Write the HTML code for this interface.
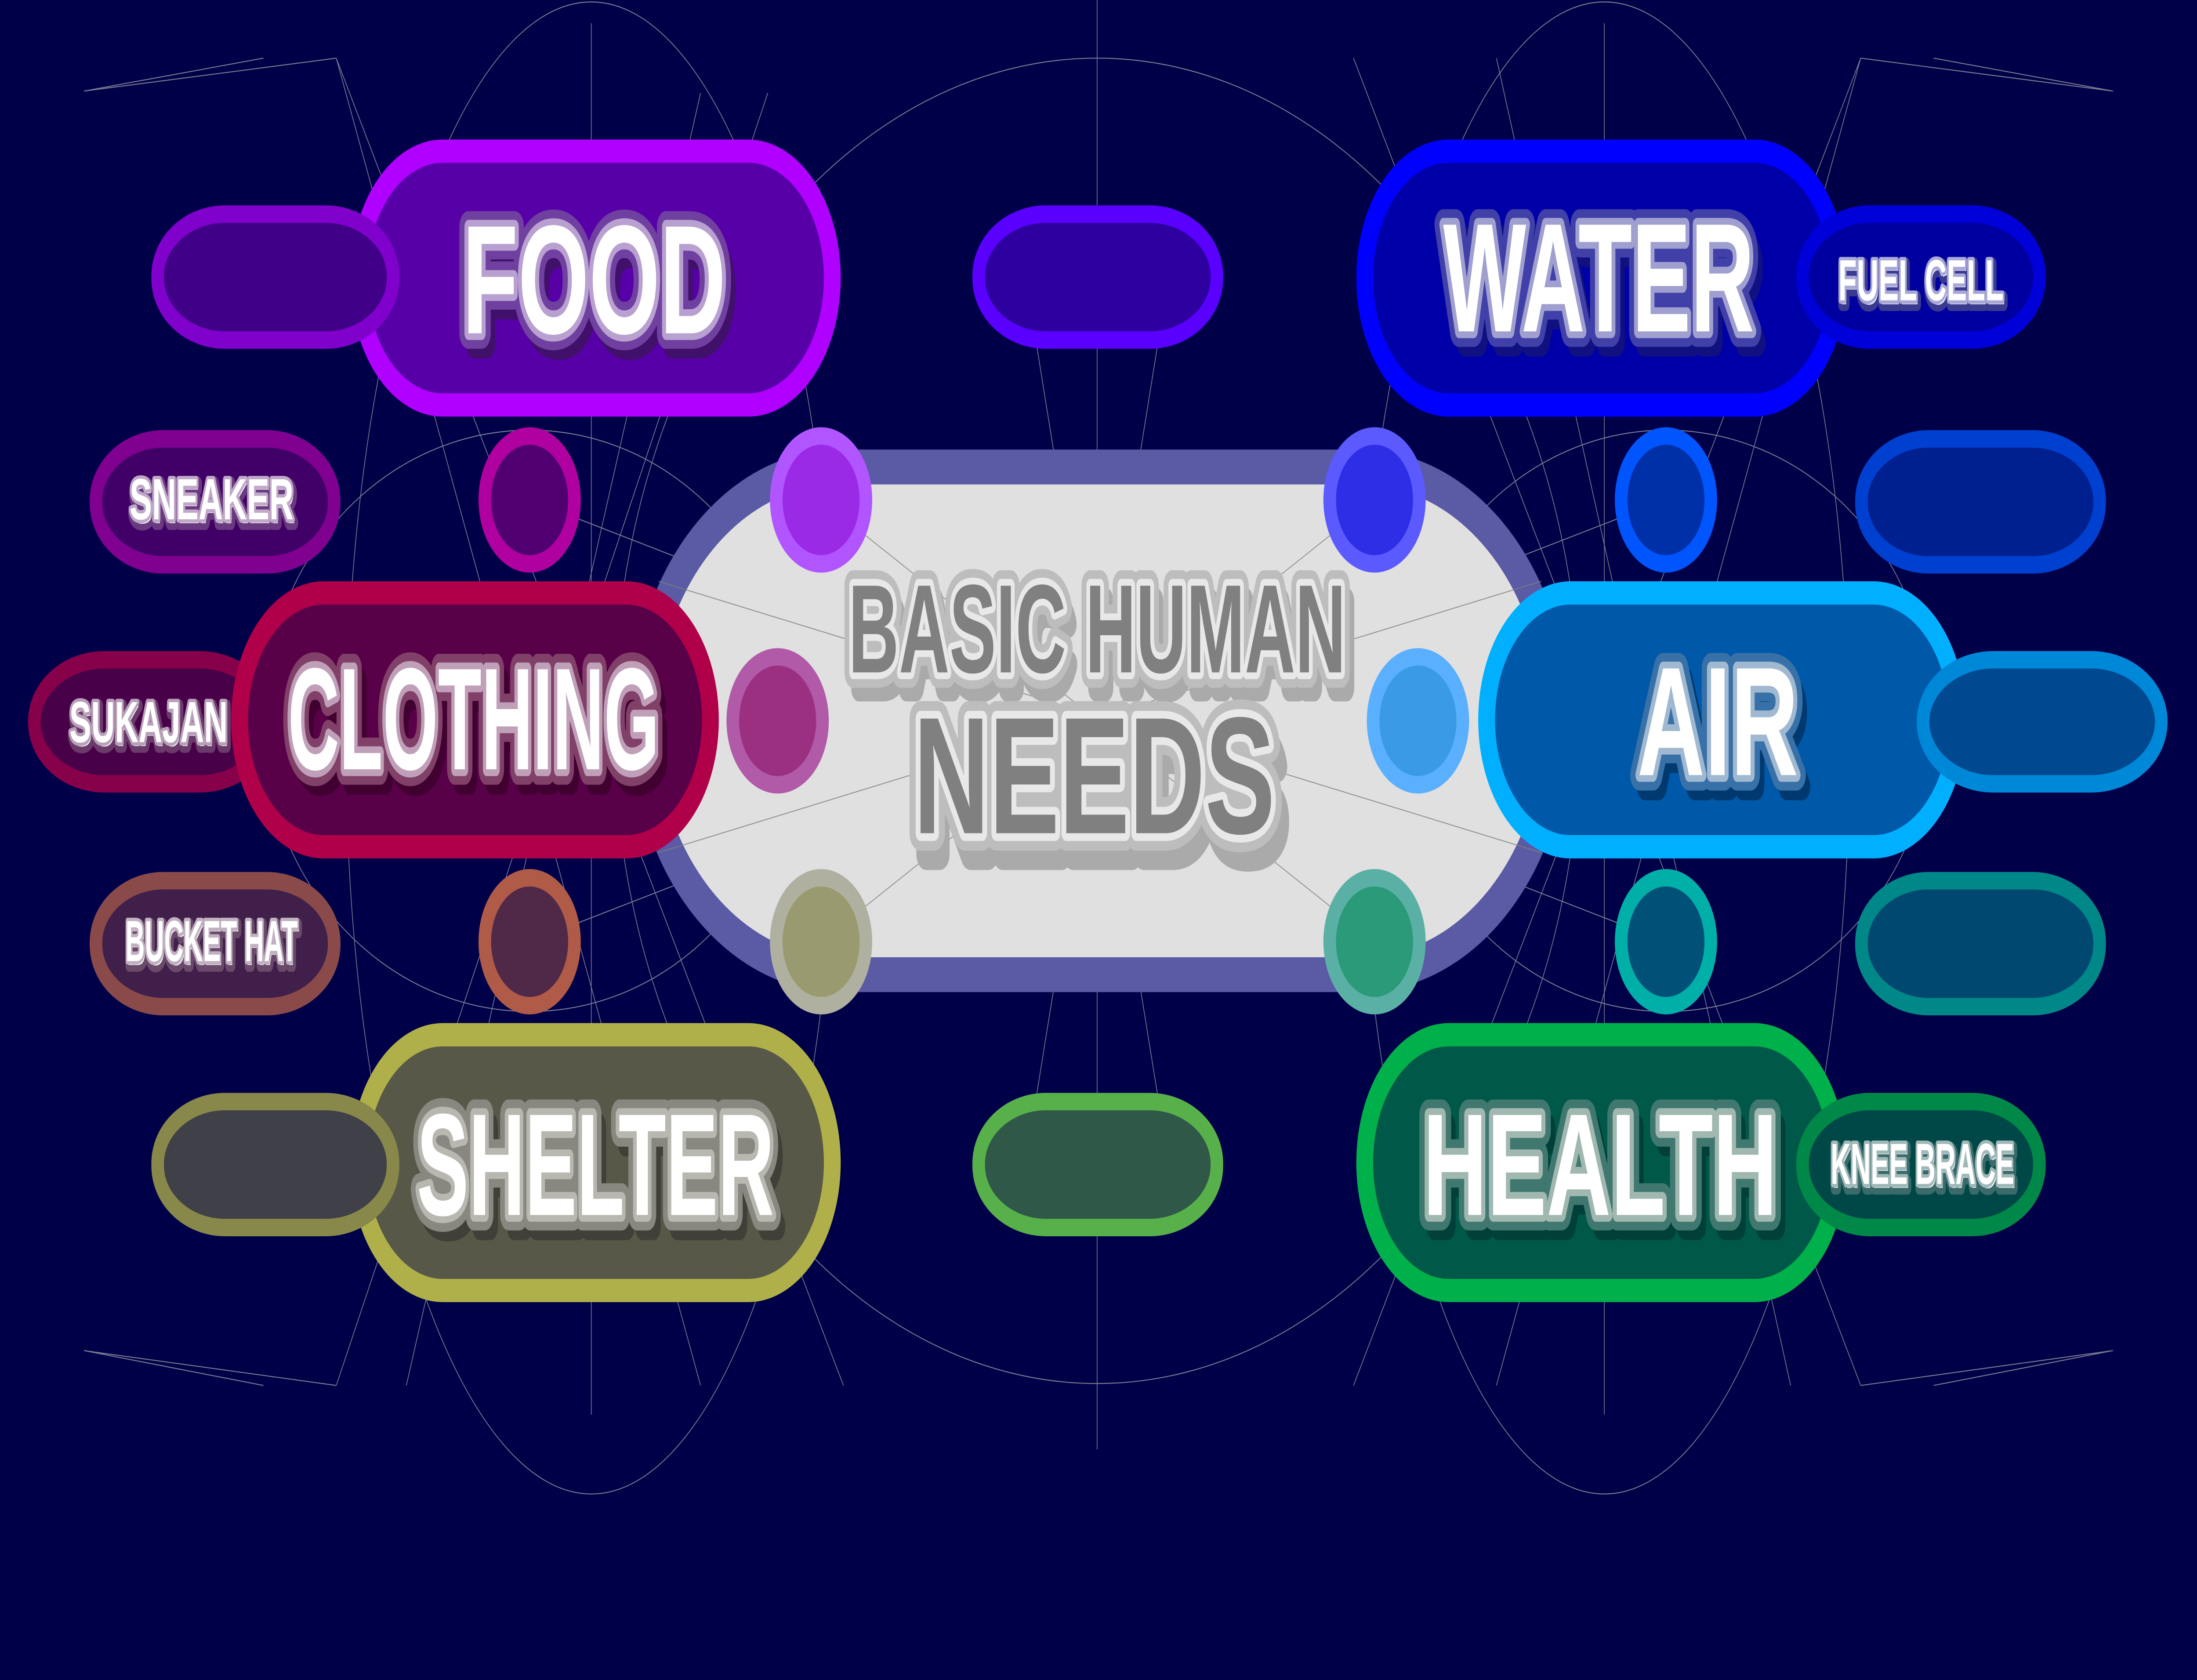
<!DOCTYPE html>
<html><head><meta charset="utf-8"><style>
html,body{margin:0;padding:0;background:#000048;width:100%;height:100%;overflow:hidden;}
svg{display:block;position:fixed;left:0;top:0;width:100vw;height:100vh}
text{font-family:"Liberation Sans","DejaVu Sans",sans-serif;font-weight:bold;text-anchor:middle;stroke-linejoin:round;paint-order:stroke}
</style></head><body>
<svg viewBox="0 0 1568 867" preserveAspectRatio="none" xmlns="http://www.w3.org/2000/svg">
<rect width="1568" height="867" fill="#000048"/>
<g fill="none" stroke="#9a9aa8" stroke-width="0.5" opacity="0.8">
<ellipse cx="422" cy="386" rx="175" ry="385"/>
<ellipse cx="1145" cy="386" rx="175" ry="385"/>
<ellipse cx="783" cy="372" rx="345" ry="342"/>
<ellipse cx="378" cy="372" rx="190" ry="150"/>
<ellipse cx="1189" cy="372" rx="190" ry="150"/>
<line x1="422" y1="12" x2="422" y2="730"/>
<line x1="1145" y1="12" x2="1145" y2="730"/>
<line x1="783" y1="0" x2="783" y2="748"/>
<line x1="60" y1="47" x2="240" y2="30"/><line x1="60" y1="47" x2="188" y2="30"/>
<line x1="240" y1="30" x2="602" y2="715"/><line x1="240" y1="30" x2="500" y2="715"/>
<line x1="60" y1="697" x2="240" y2="715"/><line x1="60" y1="697" x2="188" y2="715"/>
<line x1="240" y1="715" x2="548" y2="48"/><line x1="290" y1="715" x2="500" y2="48"/>
<line x1="1508" y1="47" x2="1328" y2="30"/><line x1="1508" y1="47" x2="1380" y2="30"/>
<line x1="1328" y1="30" x2="966" y2="715"/><line x1="1328" y1="30" x2="1068" y2="715"/>
<line x1="1508" y1="697" x2="1328" y2="715"/><line x1="1508" y1="697" x2="1380" y2="715"/>
<line x1="1328" y1="715" x2="966" y2="30"/><line x1="1278" y1="715" x2="1068" y2="30"/>
<line x1="378" y1="258" x2="1189" y2="486"/><line x1="378" y1="486" x2="1189" y2="258"/>
<line x1="555" y1="372" x2="1012" y2="372"/>
<line x1="732" y1="143" x2="783" y2="372"/><line x1="834" y1="143" x2="783" y2="372"/>
<line x1="732" y1="600" x2="783" y2="372"/><line x1="834" y1="600" x2="783" y2="372"/>
</g>
<rect x="459" y="241" width="652" height="262" rx="140" ry="131" fill="#e0e0e0" stroke="#5a5aa5" stroke-width="18"/>
<g fill="none" stroke="#808080" stroke-width="0.5" opacity="0.8">
<line x1="586" y1="258" x2="981" y2="486"/><line x1="586" y1="486" x2="981" y2="258"/>
<line x1="470" y1="300" x2="1100" y2="440"/><line x1="470" y1="440" x2="1100" y2="300"/>
</g>
<rect x="24.5" y="340.5" width="168" height="64" rx="50" ry="32" fill="#480048" stroke="#86004a" stroke-width="9"/>
<rect x="256" y="78" width="338" height="131" rx="60" ry="66" fill="#5800a8" stroke="#b000ff" stroke-width="12"/>
<rect x="974" y="78" width="338" height="131" rx="60" ry="66" fill="#0000a8" stroke="#0000ff" stroke-width="12"/>
<rect x="171" y="306" width="336" height="131" rx="60" ry="66" fill="#580048" stroke="#b0004a" stroke-width="12"/>
<rect x="1061" y="306" width="336" height="131" rx="60" ry="66" fill="#0058a8" stroke="#00b0ff" stroke-width="12"/>
<rect x="256" y="534" width="338" height="132" rx="60" ry="66" fill="#585848" stroke="#b0b04a" stroke-width="12"/>
<rect x="974" y="534" width="338" height="132" rx="60" ry="66" fill="#005848" stroke="#00b04a" stroke-width="12"/>
<g stroke-width="9">
<rect x="1372.5" y="340.5" width="170" height="64" rx="50" ry="32" fill="#004890" stroke="#0088d8"/>
<rect x="112.5" y="110.5" width="168" height="65" rx="48" ry="32" fill="#400088" stroke="#8000cc"/>
<rect x="698.5" y="110.5" width="170" height="65" rx="48" ry="32" fill="#2e00a0" stroke="#5a00ff"/>
<rect x="1286.5" y="110.5" width="169" height="65" rx="48" ry="32" fill="#0000a0" stroke="#0000d8"/>
<rect x="68.5" y="226.5" width="170" height="65" rx="48" ry="32" fill="#400068" stroke="#800090"/>
<rect x="1328.5" y="226.5" width="170" height="65" rx="48" ry="32" fill="#002090" stroke="#0040d0"/>
<rect x="68.5" y="454.5" width="170" height="65" rx="48" ry="32" fill="#40204a" stroke="#8a4a4a"/>
<rect x="1328.5" y="454.5" width="170" height="65" rx="48" ry="32" fill="#004870" stroke="#008888"/>
<rect x="112.5" y="568.5" width="168" height="65" rx="48" ry="32" fill="#404048" stroke="#88884a"/>
<rect x="698.5" y="568.5" width="170" height="65" rx="48" ry="32" fill="#305848" stroke="#58b04a"/>
<rect x="1286.5" y="568.5" width="169" height="65" rx="48" ry="32" fill="#004848" stroke="#008848"/>
</g>
<g stroke-width="9">
<ellipse cx="378" cy="258" rx="32" ry="33" fill="#500070" stroke="#b000a0"/>
<ellipse cx="586" cy="258" rx="32" ry="33" fill="#9b2ae6" stroke="#b055ff"/>
<ellipse cx="981" cy="258" rx="32" ry="33" fill="#2e2ee6" stroke="#5a5aff"/>
<ellipse cx="1189" cy="258" rx="32" ry="33" fill="#0030a8" stroke="#0055ff"/>
<ellipse cx="555" cy="372" rx="32" ry="33" fill="#9c3080" stroke="#b05aa8"/>
<ellipse cx="1012" cy="372" rx="32" ry="33" fill="#3a9ae6" stroke="#5ab0ff"/>
<ellipse cx="378" cy="486" rx="32" ry="33" fill="#502848" stroke="#b05a48"/>
<ellipse cx="586" cy="486" rx="32" ry="33" fill="#9a9a70" stroke="#b0b0a0"/>
<ellipse cx="981" cy="486" rx="32" ry="33" fill="#2a9a78" stroke="#5ab0a5"/>
<ellipse cx="1189" cy="486" rx="32" ry="33" fill="#005078" stroke="#00b0a8"/>
</g>
<g font-size="80">
<text x="428" y="178" textLength="188" lengthAdjust="spacingAndGlyphs" fill="#40106a" stroke="#40106a" stroke-width="14">FOOD</text>
<text x="424" y="172" textLength="188" lengthAdjust="spacingAndGlyphs" fill="#fff" stroke="#7040a0" stroke-width="16">FOOD</text>
<text x="424" y="172" textLength="188" lengthAdjust="spacingAndGlyphs" fill="#fff" stroke="#b8a0d0" stroke-width="7">FOOD</text>
<text x="1145" y="177" textLength="222" lengthAdjust="spacingAndGlyphs" fill="#101080" stroke="#101080" stroke-width="14">WATER</text>
<text x="1141" y="171" textLength="222" lengthAdjust="spacingAndGlyphs" fill="#fff" stroke="#4040a8" stroke-width="16">WATER</text>
<text x="1141" y="171" textLength="222" lengthAdjust="spacingAndGlyphs" fill="#fff" stroke="#a0a0d0" stroke-width="7">WATER</text>
<text x="1230" y="406" textLength="115" lengthAdjust="spacingAndGlyphs" fill="#003870" stroke="#003870" stroke-width="14">AIR</text>
<text x="1226" y="400" textLength="115" lengthAdjust="spacingAndGlyphs" fill="#fff" stroke="#3870a8" stroke-width="16">AIR</text>
<text x="1226" y="400" textLength="115" lengthAdjust="spacingAndGlyphs" fill="#fff" stroke="#a0b8d0" stroke-width="7">AIR</text>
</g>
<g font-size="75">
<text x="342" y="403" textLength="265" lengthAdjust="spacingAndGlyphs" fill="#400030" stroke="#400030" stroke-width="14">CLOTHING</text>
<text x="338" y="397" textLength="265" lengthAdjust="spacingAndGlyphs" fill="#fff" stroke="#804068" stroke-width="16">CLOTHING</text>
<text x="338" y="397" textLength="265" lengthAdjust="spacingAndGlyphs" fill="#fff" stroke="#c0a0b8" stroke-width="7">CLOTHING</text>
<text x="429" y="633" textLength="255" lengthAdjust="spacingAndGlyphs" fill="#404038" stroke="#404038" stroke-width="14">SHELTER</text>
<text x="425" y="627" textLength="255" lengthAdjust="spacingAndGlyphs" fill="#fff" stroke="#888880" stroke-width="16">SHELTER</text>
<text x="425" y="627" textLength="255" lengthAdjust="spacingAndGlyphs" fill="#fff" stroke="#b8b8b0" stroke-width="7">SHELTER</text>
<text x="1146" y="633" textLength="253" lengthAdjust="spacingAndGlyphs" fill="#004038" stroke="#004038" stroke-width="14">HEALTH</text>
<text x="1142" y="627" textLength="253" lengthAdjust="spacingAndGlyphs" fill="#fff" stroke="#407870" stroke-width="16">HEALTH</text>
<text x="1142" y="627" textLength="253" lengthAdjust="spacingAndGlyphs" fill="#fff" stroke="#a0b8b0" stroke-width="7">HEALTH</text>
</g>
<text x="787" y="355" font-size="65" textLength="355" lengthAdjust="spacingAndGlyphs" fill="#aaaaaa" stroke="#aaaaaa" stroke-width="14">BASIC HUMAN</text>
<text x="783" y="347" font-size="65" textLength="355" lengthAdjust="spacingAndGlyphs" fill="#808080" stroke="#bdbdbd" stroke-width="16">BASIC HUMAN</text>
<text x="783" y="347" font-size="65" textLength="355" lengthAdjust="spacingAndGlyphs" fill="#808080" stroke="#e8e8e8" stroke-width="7">BASIC HUMAN</text>
<text x="786" y="441" font-size="86" textLength="260" lengthAdjust="spacingAndGlyphs" fill="#aaaaaa" stroke="#aaaaaa" stroke-width="16">NEEDS</text>
<text x="781" y="430" font-size="86" textLength="258" lengthAdjust="spacingAndGlyphs" fill="#808080" stroke="#bdbdbd" stroke-width="18">NEEDS</text>
<text x="781" y="430" font-size="86" textLength="258" lengthAdjust="spacingAndGlyphs" fill="#808080" stroke="#e8e8e8" stroke-width="8">NEEDS</text>
<g font-size="30">
<text x="152" y="270" textLength="117" lengthAdjust="spacingAndGlyphs" fill="#fff" stroke="#6a3a80" stroke-width="7">SNEAKER</text>
<text x="151" y="268" textLength="117" lengthAdjust="spacingAndGlyphs" fill="#fff" stroke="#c0a8c8" stroke-width="3.5">SNEAKER</text>
<text x="107" y="385" textLength="113" lengthAdjust="spacingAndGlyphs" fill="#fff" stroke="#6a3a6a" stroke-width="7">SUKAJAN</text>
<text x="106" y="383" textLength="113" lengthAdjust="spacingAndGlyphs" fill="#fff" stroke="#b8a0b8" stroke-width="3.5">SUKAJAN</text>
<text x="152" y="498" textLength="123" lengthAdjust="spacingAndGlyphs" fill="#fff" stroke="#6a4a6a" stroke-width="7">BUCKET HAT</text>
<text x="151" y="496" textLength="123" lengthAdjust="spacingAndGlyphs" fill="#fff" stroke="#c0b0c0" stroke-width="3.5">BUCKET HAT</text>
<text x="1372" y="157" textLength="118" lengthAdjust="spacingAndGlyphs" fill="#fff" stroke="#3a3a90" stroke-width="7">FUEL CELL</text>
<text x="1371" y="155" textLength="118" lengthAdjust="spacingAndGlyphs" fill="#fff" stroke="#a8a8d8" stroke-width="3.5">FUEL CELL</text>
<text x="1373" y="613" textLength="131" lengthAdjust="spacingAndGlyphs" fill="#fff" stroke="#3a6a6a" stroke-width="7">KNEE BRACE</text>
<text x="1372" y="611" textLength="131" lengthAdjust="spacingAndGlyphs" fill="#fff" stroke="#a0b8b8" stroke-width="3.5">KNEE BRACE</text>
</g>
</svg>
</body></html>
